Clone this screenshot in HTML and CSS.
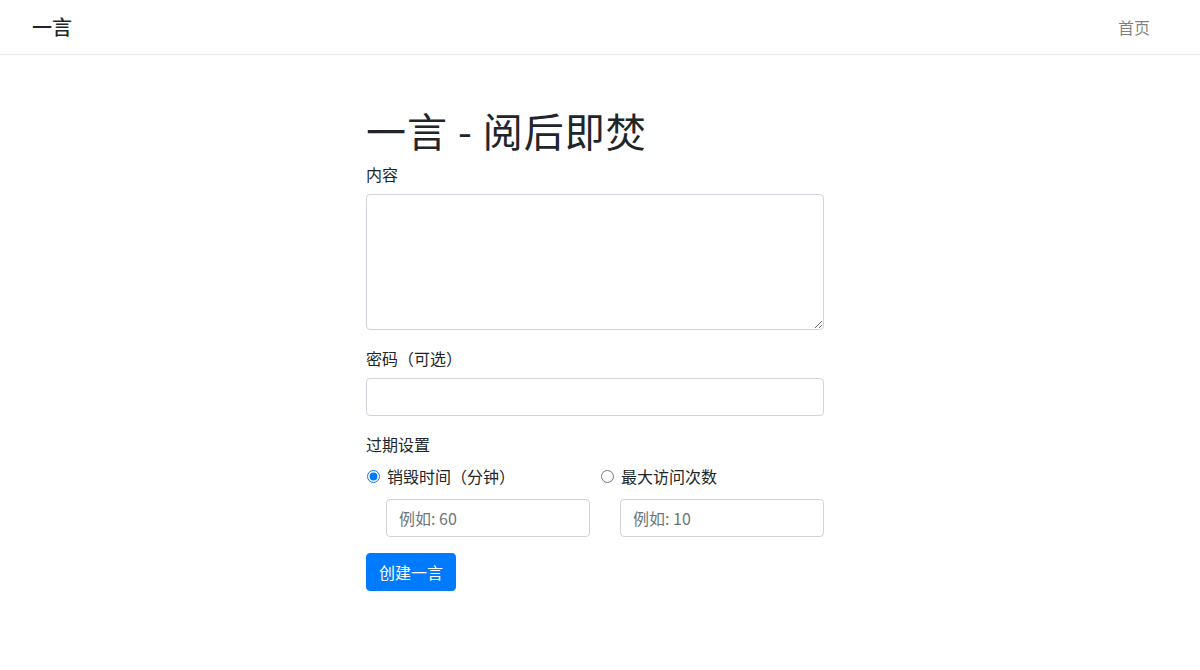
FILE: index.html
```html
<!DOCTYPE html>
<html lang="zh-CN">
<head>
<meta charset="utf-8">
<title>一言 - 阅后即焚</title>
<link rel="stylesheet" href="styles.css">
</head>
<body>
<nav class="navbar">
  <a class="brand" href="#">一言</a>
  <a class="nav-link" href="#">首页</a>
</nav>
<main class="page">
  <h1 class="title">一言 - 阅后即焚</h1>
  <form class="form">
    <div class="group">
      <label class="label">内容</label>
      <textarea class="control area"></textarea>
    </div>
    <div class="group">
      <label class="label">密码（可选）</label>
      <input class="control" type="password">
    </div>
    <div class="group">
      <label class="label">过期设置</label>
      <div class="options">
        <div class="option">
          <label class="check"><input type="radio" name="exp" checked><span>销毁时间（分钟）</span></label>
          <input class="control" type="text" placeholder="例如: 60">
        </div>
        <div class="option">
          <label class="check"><input type="radio" name="exp"><span>最大访问次数</span></label>
          <input class="control" type="text" placeholder="例如: 10">
        </div>
      </div>
    </div>
    <button class="btn" type="button">创建一言</button>
  </form>
</main>
</body>
</html>
```
FILE: styles.css
```css
* { box-sizing: border-box; }
html, body { margin: 0; }
body {
  font-family: "Noto Sans CJK SC", "Noto Sans", "Liberation Sans", sans-serif;
  font-size: 16px;
  line-height: 1.5;
  color: #212529;
  background: #fff;
}
.navbar {
  display: flex;
  justify-content: space-between;
  align-items: center;
  height: 55px;
  padding: 0 42px 0 32px;
  border-bottom: 1px solid #e9e9e9;
}
.brand {
  font-size: 20px;
  font-weight: 500;
  color: #212529;
  text-decoration: none;
  line-height: 30px;
}
.nav-link {
  color: rgba(0,0,0,.5);
  text-decoration: none;
  padding: 8px;
}
.page {
  width: 458px;
  margin-left: calc(50% - 234px);
  padding-top: 51px;
}
.title {
  margin: 0 0 8px;
  font-size: 40px;
  font-weight: 400;
  line-height: 48px;
  letter-spacing: 1px;
}
.form { display: flex; flex-direction: column; }
.group { margin-bottom: 16px; }
.label {
  display: block;
  margin-bottom: 8px;
  line-height: 24px;
}
.control {
  display: block;
  width: 100%;
  height: 38px;
  padding: 6px 12px;
  font: inherit;
  color: #495057;
  border: 1px solid #ced4da;
  border-radius: 4px;
  background: #fff;
}
.control::placeholder { color: #6c757d; }
.area { height: 136px; resize: vertical; }
.options {
  display: grid;
  grid-template-columns: 1fr 1fr;
  gap: 10px;
}
.option { padding-left: 20px; }
.check {
  display: flex;
  align-items: center;
  margin-left: -20px;
  line-height: 24px;
  margin-bottom: 11px;
}
.check input {
  width: 13px;
  height: 13px;
  margin: 0 7px 0 1px;
  accent-color: #007bff;
}
.btn {
  align-self: flex-start;
  height: 38px;
  padding: 6px 12px;
  font: inherit;
  color: #fff;
  background: #007bff;
  border: 1px solid #007bff;
  border-radius: 4px;
}
```
